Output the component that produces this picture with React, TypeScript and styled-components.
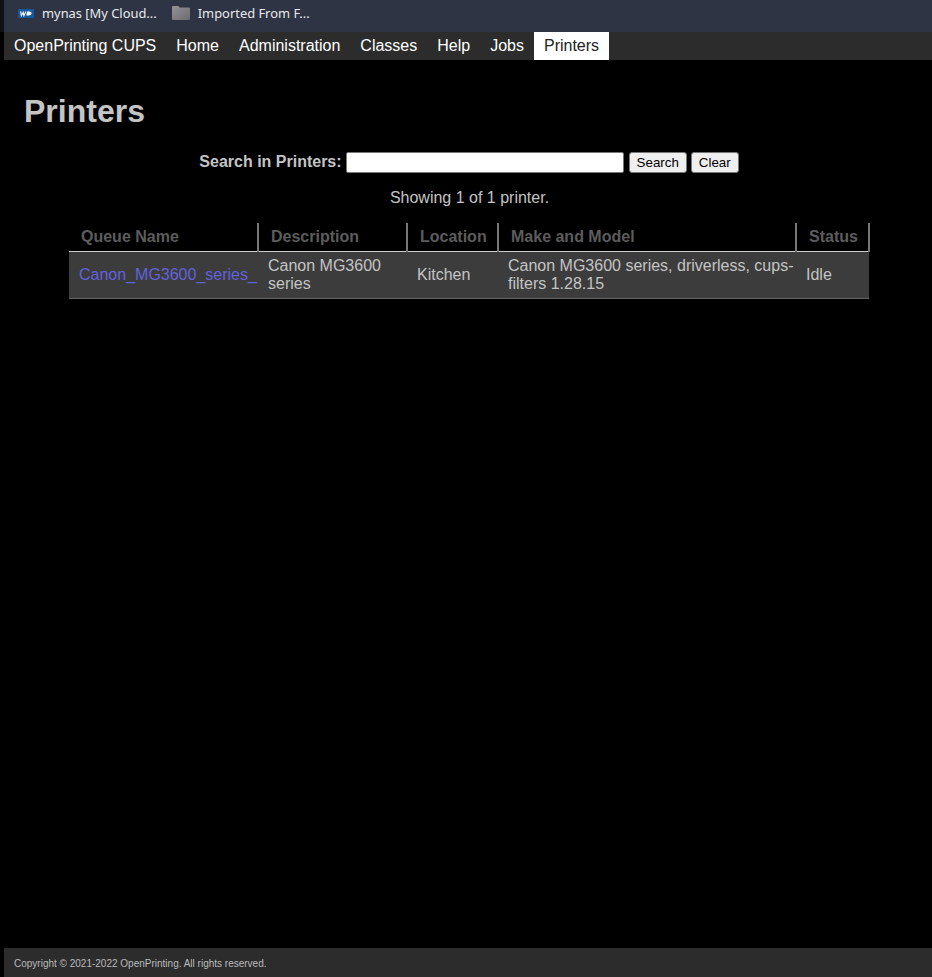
import React from 'react';
import styled, { createGlobalStyle } from 'styled-components';

const sans = '"Liberation Sans", Arial, sans-serif';

const GlobalStyle = createGlobalStyle`
  html, body {
    margin: 0;
    padding: 0;
    background: #000;
  }
  body {
    font-family: ${sans};
    font-size: 16px;
    color: #c4c4c4;
  }
`;

const Page = styled.div`
  display: flex;
  flex-direction: column;
  height: 977px;
  overflow: hidden;
`;

const BookmarkBar = styled.div`
  display: flex;
  align-items: center;
  gap: 15px;
  flex: none;
  height: 32px;
  padding: 0 0 6px 14px;
  box-sizing: border-box;
  background: #2e3444;
  border-left: 4px solid #101114;
`;

const Bookmark = styled.div`
  display: flex;
  align-items: center;
  gap: 8px;
  font-family: "Noto Sans", "Open Sans", sans-serif;
  font-size: 12.9px;
  color: #e8e9ec;
`;

const Body = styled.div`
  display: flex;
  flex: 1;
  flex-direction: column;
  min-height: 0;
  margin-left: 4px;
`;

const Nav = styled.nav`
  display: flex;
  flex: none;
  height: 28px;
  background: #2c2c2c;
`;

const NavItem = styled.a<{ $active?: boolean }>`
  padding: 0 10px;
  line-height: 27px;
  font-size: 16px;
  color: ${({ $active }) => ($active ? '#222' : '#fff')};
  background: ${({ $active }) => ($active ? '#fff' : 'transparent')};
`;

const Main = styled.main`
  flex: 1;
  padding: 0 20px;
`;

const Title = styled.h1`
  margin: 33px 0 0;
  font-size: 32px;
  line-height: 37px;
  font-weight: 700;
  color: #c4c4c4;
`;

const SearchForm = styled.form`
  display: flex;
  justify-content: center;
  align-items: center;
  gap: 4px;
  margin: 21px 0 0 2px;
  height: 22px;
`;

const SearchLabel = styled.label`
  font-weight: 700;
`;

const SearchInput = styled.input`
  width: 278px;
  height: 21px;
  margin-right: 1px;
  box-sizing: border-box;
  border: 1px solid #767676;
  border-radius: 2px;
  background: #fff;
  padding: 1px 2px;
`;

const SearchButton = styled.button`
  height: 21px;
  box-sizing: border-box;
  padding: 1px 7px;
  border: 1px solid #767676;
  border-radius: 3px;
  background: #efefef;
  color: #000;
  font-family: ${sans};
  font-size: 13.33px;
`;

const Summary = styled.p`
  margin: 16px 0 0;
  padding-left: 3px;
  text-align: center;
  line-height: 18px;
`;

const Table = styled.table`
  width: 800px;
  margin: 16px 0 0 45px;
  border-collapse: collapse;
  table-layout: fixed;
`;

const HeadCell = styled.th`
  height: 28px;
  box-sizing: border-box;
  padding: 0 0 0 12px;
  border-right: 2px solid #777;
  border-bottom: 1px solid #ccc;
  text-align: left;
  font-size: 16px;
  font-weight: 700;
  color: #5c5c5c;
`;

const Row = styled.tr`
  background: #3c3c3c;
  border-bottom: 1px solid #666;
`;

const Cell = styled.td`
  height: 47px;
  box-sizing: border-box;
  padding: 0 0 0 10px;
  line-height: 18px;
`;

const QueueLink = styled.a`
  color: #6262dc;
  text-decoration: none;
`;

const Footer = styled.footer`
  flex: none;
  height: 29px;
  padding-left: 10px;
  background: #2c2c2c;
  font-size: 10px;
  line-height: 31px;
  color: #bbb;
`;

const navItems = ['OpenPrinting CUPS', 'Home', 'Administration', 'Classes', 'Help', 'Jobs', 'Printers'];

const columns = [
  { title: 'Queue Name', width: 189 },
  { title: 'Description', width: 149 },
  { title: 'Location', width: 91 },
  { title: 'Make and Model', width: 298 },
  { title: 'Status', width: 73 },
];

const WdLogo = () => (
  <svg width="16" height="9" viewBox="0 0 16 9" aria-hidden="true">
    <rect width="16" height="9" rx="1" fill="#155a9e" />
    <path d="M2.6 2.4 L3.4 6.6 L5.2 3.4 L5.9 6.6 L8 2.4" fill="none" stroke="#fff" strokeWidth="1.1" />
    <path d="M9 2.4 H11.6 Q13.9 2.4 13.5 4.5 Q13.1 6.6 10.6 6.6 H8.4 Z" fill="#fff" />
  </svg>
);

const FolderIcon = () => (
  <svg width="18" height="14" viewBox="0 0 18 14" aria-hidden="true">
    <defs>
      <linearGradient id="folder" x1="0" y1="0" x2="1" y2="1">
        <stop offset="0" stopColor="#939397" />
        <stop offset="1" stopColor="#6c6c70" />
      </linearGradient>
    </defs>
    <path d="M1 0 H6.5 L7.5 1.5 H17 Q18 1.5 18 2.5 V13 Q18 14 17 14 H1 Q0 14 0 13 V1 Q0 0 1 0 Z" fill="url(#folder)" />
  </svg>
);

export default function App() {
  return (
    <Page>
      <GlobalStyle />
      <BookmarkBar>
        <Bookmark>
          <WdLogo />
          mynas [My Cloud...
        </Bookmark>
        <Bookmark>
          <FolderIcon />
          Imported From F...
        </Bookmark>
      </BookmarkBar>
      <Body>
        <Nav>
          {navItems.map((item) => (
            <NavItem key={item} $active={item === 'Printers'}>
              {item}
            </NavItem>
          ))}
        </Nav>
        <Main>
          <Title>Printers</Title>
          <SearchForm>
            <SearchLabel>Search in Printers:</SearchLabel>
            <SearchInput type="search" />
            <SearchButton type="button">Search</SearchButton>
            <SearchButton type="button">Clear</SearchButton>
          </SearchForm>
          <Summary>Showing 1 of 1 printer.</Summary>
          <Table>
            <colgroup>
              {columns.map((col) => (
                <col key={col.title} width={col.width} />
              ))}
            </colgroup>
            <thead>
              <tr>
                {columns.map((col) => (
                  <HeadCell key={col.title}>{col.title}</HeadCell>
                ))}
              </tr>
            </thead>
            <tbody>
              <Row>
                <Cell>
                  <QueueLink>Canon_MG3600_series_</QueueLink>
                </Cell>
                <Cell>Canon MG3600 series</Cell>
                <Cell>Kitchen</Cell>
                <Cell>Canon MG3600 series, driverless, cups-filters 1.28.15</Cell>
                <Cell>Idle</Cell>
              </Row>
            </tbody>
          </Table>
        </Main>
        <Footer>Copyright © 2021-2022 OpenPrinting. All rights reserved.</Footer>
      </Body>
    </Page>
  );
}
